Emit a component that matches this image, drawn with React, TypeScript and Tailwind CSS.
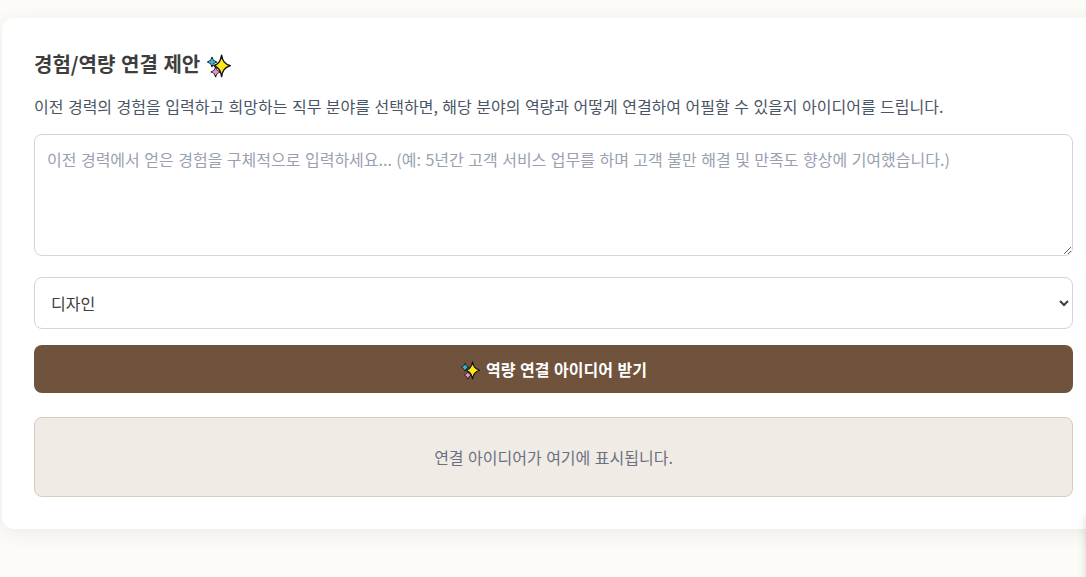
import { useState } from 'react';

const fields = ['디자인', '마케팅', '개발', '기획', '영업'];

type SparklesProps = {
  className?: string;
};

function Sparkles({ className }: SparklesProps) {
  return (
    <svg viewBox="0 0 24 24" className={className} stroke="#111111" strokeLinejoin="round" aria-hidden="true">
      <path
        d="M5 3.2 6.4 6.6 9.6 8 6.4 9.4 5 12.8 3.6 9.4.6 8 3.6 6.6Z"
        fill="#35b6d6"
        strokeWidth="1.1"
      />
      <path
        d="M5 5.2 5.9 7.1 7.8 8 5.9 8.9 5 10.8 4.1 8.9 2.2 8 4.1 7.1Z"
        fill="#35b6d6"
        stroke="#35b6d6"
        strokeWidth="1.1"
      />
      <path
        d="M8.6 13.2 10 16.5 13.2 17.9 10 19.3 8.6 22.8 7.2 19.3 4.2 17.9 7.2 16.5Z"
        fill="#ef8fc4"
        strokeWidth="1.1"
      />
      <path
        d="M8.6 15.1 9.5 17 11.4 17.9 9.5 18.8 8.6 20.7 7.7 18.8 5.8 17.9 7.7 17Z"
        fill="#ef8fc4"
        stroke="#ef8fc4"
        strokeWidth="1.1"
      />
      <path
        d="M14.6 1.1C15.6 7 17.3 9.6 23.3 11.7 17.3 13.8 15.6 16.4 14.6 22.6 13.6 16.4 12 13.8 6.8 11.7 12 9.6 13.6 7 14.6 1.1Z"
        fill="#ffe81a"
        strokeWidth="1.4"
      />
    </svg>
  );
}

export default function App() {
  const [experience, setExperience] = useState('');
  const [field, setField] = useState(fields[0]);

  return (
    <div className="relative h-screen overflow-hidden bg-[#fdfbf7] pt-[18px] pl-[2px] font-['Noto_Sans_CJK_KR',sans-serif] text-base text-[#3d3d3d] [word-spacing:0.9px]">
      <section className="w-[1103px] rounded-xl bg-white p-8 shadow-[0_4px_20px_rgba(0,0,0,0.07)]">
        <h3 className="mb-4 flex items-center text-xl font-bold [word-spacing:1.12px]">
          경험/역량 연결 제안
          <Sparkles className="ml-[7px] mt-[3px] h-6 w-6" />
        </h3>
        <p className="mb-4 text-gray-600">
          이전 경력의 경험을 입력하고 희망하는 직무 분야를 선택하면, 해당 분야의 역량과 어떻게 연결하여 어필할 수 있을지 아이디어를 드립니다.
        </p>
        <textarea
          rows={4}
          value={experience}
          onChange={(e) => setExperience(e.target.value)}
          placeholder="이전 경력에서 얻은 경험을 구체적으로 입력하세요... (예: 5년간 고객 서비스 업무를 하며 고객 불만 해결 및 만족도 향상에 기여했습니다.)"
          className="mb-[21px] block h-[122px] w-full rounded-lg border border-gray-300 p-3 [word-spacing:0.9px] placeholder:text-gray-400"
        />
        <select
          value={field}
          onChange={(e) => setField(e.target.value)}
          className="mb-4 block h-[52px] w-full rounded-lg border border-gray-300 bg-white p-3"
        >
          {fields.map((name) => (
            <option key={name} value={name}>
              {name}
            </option>
          ))}
        </select>
        <button className="flex h-12 w-full items-center justify-center rounded-lg bg-[#6f533c] pl-px font-bold text-white [word-spacing:0.9px]">
          <Sparkles className="mr-1.5 mt-[3px] h-[19px] w-[19px]" />
          역량 연결 아이디어 받기
        </button>
        <div className="mt-6 flex h-20 items-center justify-center rounded-lg border border-[#d6cdc0] bg-[#f0ebe5] text-gray-500">
          연결 아이디어가 여기에 표시됩니다.
        </div>
      </section>

      {/* Floating panel parked off the right edge */}
      <div className="absolute top-[516px] left-full h-20 w-20 bg-white shadow-[0_0_8px_rgba(0,0,0,0.16)]" />
    </div>
  );
}
